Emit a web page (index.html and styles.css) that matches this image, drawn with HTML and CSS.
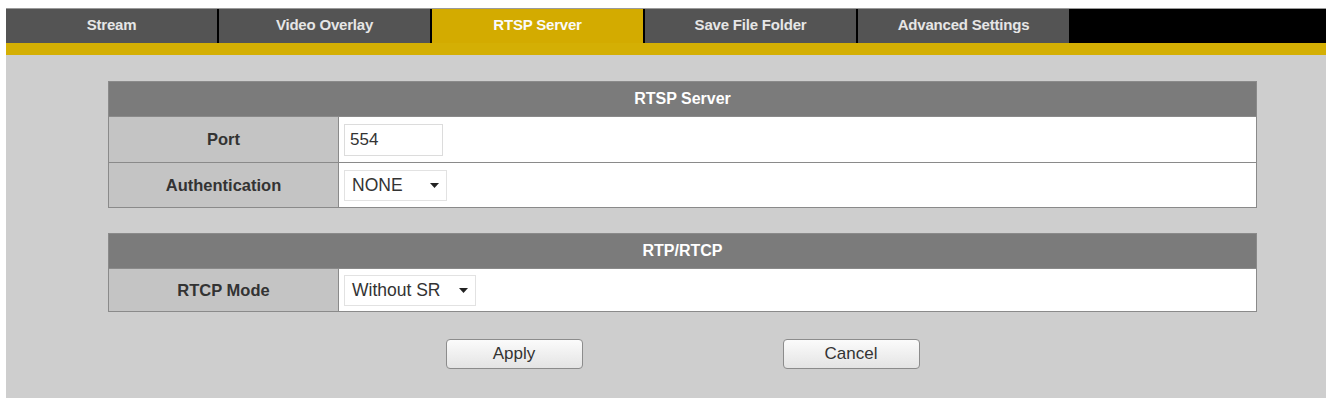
FILE: index.html
```html
<!DOCTYPE html>
<html>
<head>
<meta charset="utf-8">
<title>RTSP Server</title>
<link rel="stylesheet" href="styles.css">
</head>
<body>
<div class="page">
  <nav class="tabs">
    <div class="tab">Stream</div>
    <div class="tab">Video Overlay</div>
    <div class="tab active">RTSP Server</div>
    <div class="tab">Save File Folder</div>
    <div class="tab">Advanced Settings</div>
  </nav>
  <div class="stripe"></div>
  <main class="content">
    <div class="panels">
      <section class="panel">
        <div class="panel-head">RTSP Server</div>
        <div class="row">
          <div class="label">Port</div>
          <div class="value"><input class="text-input" type="text" value="554"></div>
        </div>
        <div class="row row-b">
          <div class="label">Authentication</div>
          <div class="value">
            <div class="select select-none"><span>NONE</span><svg class="arrow" width="9" height="5" viewBox="0 0 9 5"><path d="M0 0H9L4.5 5Z" fill="#222"/></svg></div>
          </div>
        </div>
      </section>
      <section class="panel panel-2">
        <div class="panel-head">RTP/RTCP</div>
        <div class="row row-c">
          <div class="label">RTCP Mode</div>
          <div class="value">
            <div class="select select-sr"><span>Without SR</span><svg class="arrow" width="9" height="5" viewBox="0 0 9 5"><path d="M0 0H9L4.5 5Z" fill="#222"/></svg></div>
          </div>
        </div>
      </section>
      <div class="actions">
        <button class="btn" type="button">Apply</button>
        <button class="btn" type="button">Cancel</button>
      </div>
    </div>
  </main>
</div>
</body>
</html>
```

FILE: styles.css
```css
html, body {
  margin: 0;
  padding: 0;
  background: #ffffff;
}

body {
  font-family: "Liberation Sans", Arial, sans-serif;
  color: #333;
}

.page {
  padding-top: 8px;
  margin-left: 6px;
  width: 1320px;
}

.tabs {
  display: flex;
  gap: 2px;
  height: 35px;
  background: #000;
  border-top: 1px solid #9a9a9a;
  box-sizing: border-box;
}

.tab {
  width: 211px;
  display: flex;
  align-items: center;
  justify-content: center;
  background: #545454;
  color: #e6e6e6;
  font-weight: bold;
  font-size: 15px;
  letter-spacing: -0.2px;
  padding-bottom: 3px;
  box-sizing: border-box;
}

.tab.active {
  background: #d3ab00;
  color: #fafafa;
}

.stripe {
  height: 12px;
  background: #d4af04;
}

.content {
  background: #cecece;
  height: 343px;
  padding-top: 26px;
  box-sizing: border-box;
}

.panels {
  margin-left: 102px;
  width: 1149px;
}

.panel {
  border: 1px solid #8a8a8a;
  background: #fff;
}

.panel-2 {
  margin-top: 25px;
}

.panel-head {
  height: 34px;
  background: #7b7b7b;
  color: #fff;
  font-weight: bold;
  font-size: 16px;
  display: flex;
  align-items: center;
  justify-content: center;
}

.row {
  display: grid;
  grid-template-columns: 230px 1fr;
  height: 45px;
  border-top: 1px solid #8a8a8a;
}

.row-b {
  height: 44px;
}

.row-c {
  height: 42px;
}

.label {
  background: #c4c4c4;
  border-right: 1px solid #8a8a8a;
  display: flex;
  align-items: center;
  justify-content: center;
  font-weight: bold;
  font-size: 16.5px;
  color: #333;
}

.value {
  background: #fff;
  display: flex;
  align-items: center;
  padding-left: 5px;
}

.text-input {
  width: 99px;
  height: 32px;
  box-sizing: border-box;
  border: 1px solid #dcdcdc;
  padding: 0 0 0 5px;
  font-family: "Liberation Sans", Arial, sans-serif;
  font-size: 17px;
  color: #333;
  background: #fff;
  outline: none;
}

.select {
  height: 31px;
  box-sizing: border-box;
  border: 1px solid #e2e2e2;
  display: flex;
  align-items: center;
  justify-content: space-between;
  padding: 0 7px 0 7px;
  font-size: 17.5px;
  color: #333;
  background: #fff;
}

.select-none {
  width: 103px;
}

.select-sr {
  width: 132px;
}

.arrow {
  display: block;
}

.actions {
  display: flex;
  justify-content: center;
  gap: 200px;
  margin-top: 27px;
}

.btn {
  width: 137px;
  height: 30px;
  border: 1px solid #8c8c8c;
  border-radius: 4px;
  background: linear-gradient(#fbfbfb, #e4e4e4);
  font-family: "Liberation Sans", Arial, sans-serif;
  font-size: 17px;
  color: #333;
  padding: 0;
}
```
